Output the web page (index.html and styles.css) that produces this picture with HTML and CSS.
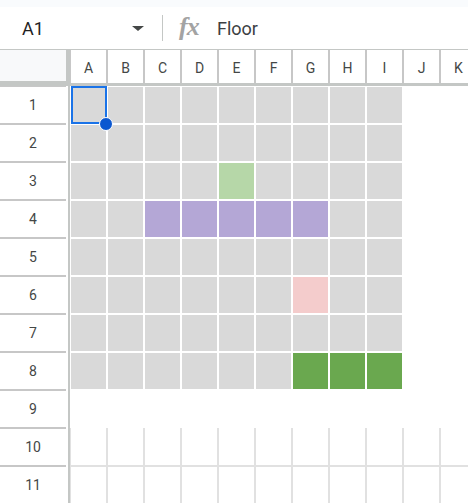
FILE: index.html
```html
<!DOCTYPE html>
<html>
<head>
<meta charset="utf-8">
<link rel="stylesheet" href="styles.css">
</head>
<body>
<div class="app">
  <div class="topstrip"></div>
  <div class="fbar">
    <div class="namebox"><span class="ref">A1</span><span class="caret"></span></div>
    <div class="sep"></div>
    <div class="fx">fx</div>
    <div class="formula">Floor</div>
  </div>
  <div class="sheet">
    <!-- header row -->
    <div class="corner"><div class="corner-in"></div></div>
    <div class="ch">A</div><div class="ch">B</div><div class="ch">C</div><div class="ch">D</div><div class="ch">E</div><div class="ch">F</div><div class="ch">G</div><div class="ch">H</div><div class="ch">I</div><div class="ch">J</div><div class="ch">K</div>
    <!-- row 1 -->
    <div class="rh"><div class="rh-in">1</div></div>
    <div class="c g a1"><div class="sel"><div class="dot"></div></div></div><div class="c g"></div><div class="c g"></div><div class="c g"></div><div class="c g"></div><div class="c g"></div><div class="c g"></div><div class="c g"></div><div class="c g"></div><div class="c"></div><div class="c"></div>
    <!-- row 2 -->
    <div class="rh"><div class="rh-in">2</div></div>
    <div class="c g"></div><div class="c g"></div><div class="c g"></div><div class="c g"></div><div class="c g"></div><div class="c g"></div><div class="c g"></div><div class="c g"></div><div class="c g"></div><div class="c"></div><div class="c"></div>
    <!-- row 3 -->
    <div class="rh"><div class="rh-in">3</div></div>
    <div class="c g"></div><div class="c g"></div><div class="c g"></div><div class="c g"></div><div class="c lg"></div><div class="c g"></div><div class="c g"></div><div class="c g"></div><div class="c g"></div><div class="c"></div><div class="c"></div>
    <!-- row 4 -->
    <div class="rh"><div class="rh-in">4</div></div>
    <div class="c g"></div><div class="c g"></div><div class="c pu"></div><div class="c pu"></div><div class="c pu"></div><div class="c pu"></div><div class="c pu"></div><div class="c g"></div><div class="c g"></div><div class="c"></div><div class="c"></div>
    <!-- row 5 -->
    <div class="rh"><div class="rh-in">5</div></div>
    <div class="c g"></div><div class="c g"></div><div class="c g"></div><div class="c g"></div><div class="c g"></div><div class="c g"></div><div class="c g"></div><div class="c g"></div><div class="c g"></div><div class="c"></div><div class="c"></div>
    <!-- row 6 -->
    <div class="rh"><div class="rh-in">6</div></div>
    <div class="c g"></div><div class="c g"></div><div class="c g"></div><div class="c g"></div><div class="c g"></div><div class="c g"></div><div class="c pk"></div><div class="c g"></div><div class="c g"></div><div class="c"></div><div class="c"></div>
    <!-- row 7 -->
    <div class="rh"><div class="rh-in">7</div></div>
    <div class="c g"></div><div class="c g"></div><div class="c g"></div><div class="c g"></div><div class="c g"></div><div class="c g"></div><div class="c g"></div><div class="c g"></div><div class="c g"></div><div class="c"></div><div class="c"></div>
    <!-- row 8 -->
    <div class="rh"><div class="rh-in">8</div></div>
    <div class="c g"></div><div class="c g"></div><div class="c g"></div><div class="c g"></div><div class="c g"></div><div class="c g"></div><div class="c dg"></div><div class="c dg"></div><div class="c dg"></div><div class="c"></div><div class="c"></div>
    <!-- row 9 -->
    <div class="rh"><div class="rh-in">9</div></div>
    <div class="c"></div><div class="c"></div><div class="c"></div><div class="c"></div><div class="c"></div><div class="c"></div><div class="c"></div><div class="c"></div><div class="c"></div><div class="c"></div><div class="c"></div>
    <!-- row 10 -->
    <div class="rh"><div class="rh-in">10</div></div>
    <div class="c ln"></div><div class="c ln"></div><div class="c ln"></div><div class="c ln"></div><div class="c ln"></div><div class="c ln"></div><div class="c ln"></div><div class="c ln"></div><div class="c ln"></div><div class="c ln"></div><div class="c ln"></div>
    <!-- row 11 -->
    <div class="rh"><div class="rh-in">11</div></div>
    <div class="c ln2"></div><div class="c ln2"></div><div class="c ln2"></div><div class="c ln2"></div><div class="c ln2"></div><div class="c ln2"></div><div class="c ln2"></div><div class="c ln2"></div><div class="c ln2"></div><div class="c ln2"></div><div class="c ln2"></div>
  </div>
</div>
</body>
</html>
```
FILE: styles.css
```css
html, body {
  margin: 0;
  padding: 0;
  background: #ffffff;
}
body {
  width: 468px;
  height: 503px;
  overflow: hidden;
  font-family: Roboto, "Liberation Sans", Arial, sans-serif;
}
.app {
  width: 468px;
  height: 503px;
  overflow: hidden;
  display: flex;
  flex-direction: column;
}
.topstrip {
  height: 7px;
  background: #f9fbfd;
  flex: none;
}
.fbar {
  height: 42px;
  flex: none;
  display: flex;
  align-items: center;
  background: #ffffff;
}
.namebox {
  width: 152px;
  box-sizing: border-box;
  padding: 0 8px 0 22px;
  display: flex;
  align-items: center;
  justify-content: space-between;
}
.ref {
  font-size: 18px;
  color: #1f1f1f;
}
.caret {
  width: 0;
  height: 0;
  border-left: 6px solid transparent;
  border-right: 6px solid transparent;
  border-top: 5px solid #444746;
}
.sep {
  width: 1px;
  height: 26px;
  background: #c4c7c5;
  margin-left: 10px;
}
.fx {
  margin-left: 16px;
  width: 24px;
  font-family: "Liberation Serif", "DejaVu Serif", serif;
  font-style: italic;
  font-weight: bold;
  font-size: 26px;
  color: #a3a3a3;
  line-height: 1;
  letter-spacing: -1px;
  padding-bottom: 3px;
}
.formula {
  margin-left: 14px;
  font-size: 18px;
  color: #3c4043;
}
.sheet {
  flex: none;
  display: grid;
  grid-template-columns: 70px repeat(11, 37px);
  grid-template-rows: 37px repeat(11, 38px);
  width: 477px;
}
.corner {
  box-sizing: border-box;
  border-top: 1px solid #c4c7c5;
  background: #c4c7c5;
  padding: 0 4px 5px 0;
}
.corner-in {
  height: 100%;
  background: #f8f9fa;
}
.ch {
  box-sizing: border-box;
  border-top: 1px solid #c4c7c5;
  border-bottom: 3px solid #c4c7c5;
  box-shadow: inset 1px 0 #c7c7c7, inset -1px 0 #c7c7c7;
  display: flex;
  align-items: center;
  justify-content: center;
  padding-top: 2px;
  font-size: 14px;
  color: #444746;
}
.rh {
  box-sizing: border-box;
  border-right: 2px solid #c4c7c5;
  padding-right: 2px;
  background: #ffffff;
}
.rh-in {
  height: 100%;
  box-shadow: inset 0 1px #c7c7c7, inset 0 -1px #c7c7c7;
  display: flex;
  align-items: center;
  justify-content: center;
  font-size: 14px;
  color: #444746;
}
.c {
  box-sizing: border-box;
  padding: 1px;
  background-clip: content-box;
}
.g { background-color: #d9d9d9; }
.lg { background-color: #b6d7a8; }
.pu { background-color: #b4a7d6; }
.pk { background-color: #f4cccc; }
.dg { background-color: #6aa84f; }
.ln {
  box-shadow: inset 1px 0 #e1e1e1, inset -1px 0 #e1e1e1, inset 0 -1px #e1e1e1;
}
.ln2 {
  box-shadow: inset 1px 0 #e1e1e1, inset -1px 0 #e1e1e1, inset 0 1px #e1e1e1;
}
.a1 {
  position: relative;
}
.sel {
  position: absolute;
  left: 1px;
  top: 0;
  width: 36px;
  height: 38px;
  box-sizing: border-box;
  border: 2px solid #1a73e8;
  z-index: 2;
}
.dot {
  position: absolute;
  right: -8px;
  bottom: -9px;
  width: 12px;
  height: 12px;
  border-radius: 50%;
  background: #0b57d0;
  border: 1px solid #ffffff;
}
```
